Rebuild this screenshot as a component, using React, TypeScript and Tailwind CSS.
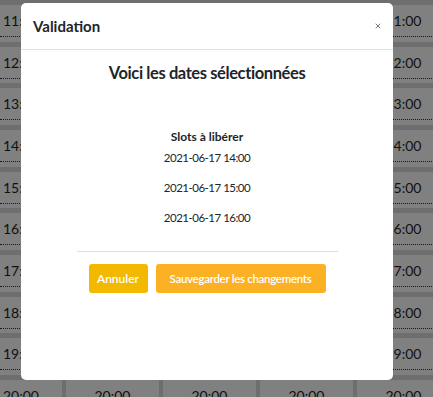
import { X } from "lucide-react";

const hours = ["11:00", "12:00", "13:00", "14:00", "15:00", "16:00", "17:00", "18:00", "19:00", "20:00"];
const slots = ["2021-06-17 14:00", "2021-06-17 15:00", "2021-06-17 16:00"];
const font = { fontFamily: '"Source Sans Pro", Lato, "Noto Sans", sans-serif' };

function Cell({ hour, first }: { hour: string; first?: boolean }) {
  return (
    <div className={`h-[36.67px] bg-[#808080] ${first ? "w-[62px]" : "w-[93px]"} shrink-0`}>
      <div
        className={`h-[32px] border-b border-dotted border-[#1a1a1a] text-[14px] leading-[32px] text-[#111] ${
          first ? "pl-[3px]" : "text-center"
        }`}
      >
        {hour}
      </div>
    </div>
  );
}

export default function App() {
  return (
    <div className="relative h-[397px] w-[433px] overflow-hidden bg-[#6e6e6e]" style={font}>
      {/* Calendar grid behind the overlay */}
      <div className="flex flex-col gap-[5px] pt-[5px]">
        {hours.map((h) => (
          <div key={h} className="flex gap-[4px]">
            <Cell hour={h} first />
            <Cell hour={h} />
            <Cell hour={h} />
            <Cell hour={h} />
            <Cell hour={h} />
          </div>
        ))}
      </div>

      {/* Modal */}
      <div className="absolute left-[21px] top-[3px] flex h-[377px] w-[372px] flex-col rounded-[5px] bg-white text-[#212529]">
        <div className="flex h-[47px] items-center justify-between border-b border-[#dee2e6] pl-3 pr-[11px]">
          <h5 className="text-[15px] font-bold">Validation</h5>
          <X className="h-[8px] w-[8px] text-[#777]" strokeWidth={3} />
        </div>
        <div className="flex flex-col items-center pt-[11px]">
          <h4 className="text-[16.5px] font-bold leading-[24px] tracking-[-0.4px]">Voici les dates sélectionnées</h4>
          <p className="mt-[42px] text-[12px] font-bold leading-[20px]">Slots à libérer</p>
          <div className="mt-[2px] flex flex-col gap-[12px]">
            {slots.map((s) => (
              <p key={s} className="text-[11.5px] leading-[18px] tracking-[-0.5px]">
                {s}
              </p>
            ))}
          </div>
          <hr className="mt-[24px] w-[261px] border-[#ddd]" />
          <div className="mt-[12px] flex gap-[8px]">
            <button className="h-[29px] w-[59px] rounded-[3px] bg-[#f2b900] text-[12px] font-semibold text-white">
              Annuler
            </button>
            <button className="h-[29px] w-[170px] rounded-[3px] bg-[#fcb124] text-[11.5px] font-semibold tracking-[-0.3px] text-white">
              Sauvegarder les changements
            </button>
          </div>
        </div>
      </div>
    </div>
  );
}
